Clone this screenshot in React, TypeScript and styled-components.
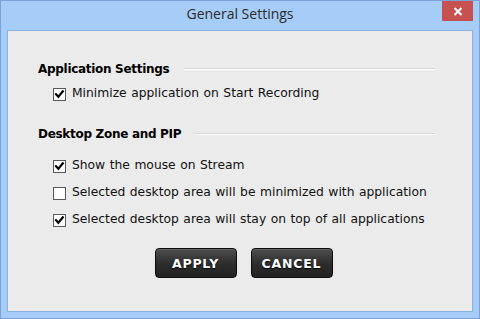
import React from "react";
import styled, { createGlobalStyle } from "styled-components";

const Global = createGlobalStyle`
  html, body { margin: 0; padding: 0; background: #a5cdf7; }
  #root { width: 480px; height: 319px; }
`;

const Window = styled.div`
  box-sizing: border-box;
  width: 480px;
  height: 319px;
  background: #a5cdf7;
  border: 1px solid #7ba2d6;
  display: flex;
  flex-direction: column;
  padding: 0 6px 6px 6px;
  position: relative;
`;

const TitleBar = styled.div`
  height: 29px;
  flex: none;
  display: flex;
  justify-content: center;
`;

const Title = styled.div`
  font-family: "Open Sans", sans-serif;
  font-size: 14px;
  line-height: 25px;
  color: #2b2b2b;
`;

const CloseButton = styled.div`
  position: absolute;
  top: 0;
  right: 6px;
  width: 31px;
  height: 20px;
  background: #c75050;
  display: flex;
  align-items: center;
  justify-content: center;
`;

const Client = styled.div`
  flex: 1;
  background: #ebebeb;
  border: 1px solid #8ab0dd;
  padding: 28px 37px 0 30px;
  display: flex;
  flex-direction: column;
`;

const SectionHeader = styled.div<{ $top: number }>`
  display: flex;
  align-items: center;
  height: 20px;
  margin-top: ${(p) => p.$top}px;
`;

const HeaderText = styled.div`
  font-family: "DejaVu Sans", sans-serif;
  font-weight: bold;
  font-size: 12px;
  letter-spacing: -0.3px;
  line-height: 20px;
  color: #000;
  white-space: nowrap;
`;

const Separator = styled.div`
  flex: 1;
  margin-left: 15px;
  border-top: 1px solid #d5d5d5;
  border-bottom: 1px solid #ffffff;
`;

const Row = styled.label<{ $top: number }>`
  display: flex;
  align-items: center;
  height: 20px;
  margin-top: ${(p) => p.$top}px;
  padding-left: 15px;
  gap: 6px;
`;

const RowText = styled.span`
  font-family: "DejaVu Sans", sans-serif;
  font-size: 12.3px;
  word-spacing: 0.6px;
  line-height: 20px;
  color: #111;
  white-space: nowrap;
`;

const Box = styled.span`
  width: 13px;
  height: 13px;
  flex: none;
  display: block;
`;

const Buttons = styled.div`
  display: flex;
  justify-content: center;
  gap: 14px;
  margin-top: 19px;
  padding-left: 14px;
`;

const Button = styled.div`
  box-sizing: border-box;
  width: 82px;
  height: 30px;
  border: 1px solid #0c0c0c;
  border-radius: 4px;
  background: linear-gradient(#4d4d4d, #2c2c2c 55%, #222222);
  box-shadow: inset 0 1px 0 rgba(255, 255, 255, 0.12);
  color: #fff;
  font-family: "DejaVu Sans", sans-serif;
  font-weight: bold;
  font-size: 12.5px;
  letter-spacing: 0.8px;
  display: flex;
  align-items: center;
  justify-content: center;
  text-shadow: 0 1px 1px #000;
`;

const CheckBox = ({ checked }: { checked: boolean }) => (
  <Box>
    <svg width="13" height="13" viewBox="0 0 13 13">
      <rect x="0.5" y="0.5" width="12" height="12" fill="#fff" stroke="#5a5a5a" />
      {checked && (
        <path
          d="M3 6.2 L5.3 8.8 L9.8 3.3"
          fill="none"
          stroke="#000"
          strokeWidth="2.2"
          strokeLinecap="square"
        />
      )}
    </svg>
  </Box>
);

const Option = ({
  label,
  checked,
  top,
}: {
  label: string;
  checked: boolean;
  top: number;
}) => (
  <Row $top={top}>
    <CheckBox checked={checked} />
    <RowText>{label}</RowText>
  </Row>
);

export default function App() {
  return (
    <>
      <Global />
      <Window>
        <TitleBar>
          <Title>General Settings</Title>
        </TitleBar>
        <CloseButton>
          <svg width="10" height="9" viewBox="0 0 10 9">
            <path d="M1.5 1 L8.5 8 M8.5 1 L1.5 8" stroke="#fff" strokeWidth="2" />
          </svg>
        </CloseButton>
        <Client>
          <SectionHeader $top={0}>
            <HeaderText>Application Settings</HeaderText>
            <Separator />
          </SectionHeader>
          <Option top={4} checked label="Minimize application on Start Recording" />
          <SectionHeader $top={21}>
            <HeaderText>Desktop Zone and PIP</HeaderText>
            <Separator />
          </SectionHeader>
          <Option top={11} checked label="Show the mouse on Stream" />
          <Option
            top={7}
            checked={false}
            label="Selected desktop area will be minimized with application"
          />
          <Option
            top={7}
            checked
            label="Selected desktop area will stay on top of all applications"
          />
          <Buttons>
            <Button>APPLY</Button>
            <Button>CANCEL</Button>
          </Buttons>
        </Client>
      </Window>
    </>
  );
}
